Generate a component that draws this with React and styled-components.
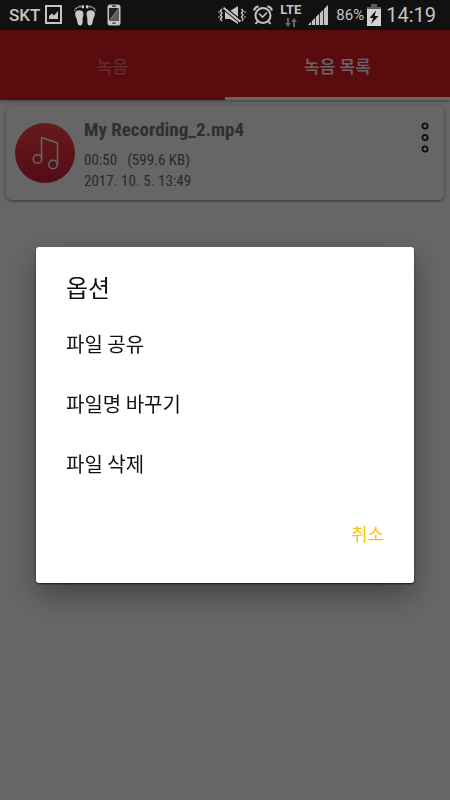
import React, { useState } from "react";
import styled, { createGlobalStyle } from "styled-components";

const tabs = ["녹음", "녹음 목록"];
const options = ["파일 공유", "파일명 바꾸기", "파일 삭제"];

function ImageIcon() {
  return (
    <Svg width="18" height="20" viewBox="0 0 18 20">
      <rect x="1" y="1" width="15" height="17" fill="none" stroke="#c4c4c4" strokeWidth="2" />
      <path d="M4 14V11L7 8.500L9 10.500L13 6V14Z" fill="#c4c4c4" />
    </Svg>
  );
}

function FeetIcon() {
  const foot = (
    <>
      <path d="M1.300 8.500C2.500 5.500 8 5.500 9.300 8.500C10 11.500 8.300 13 8.600 16C8.800 19 8.400 21.500 6.200 21.500C3.600 21.500 3.400 18 2.800 15.500C2.200 13 0.500 11.500 1.300 8.500Z" />
      <ellipse cx="8.800" cy="2.800" rx="1.400" ry="1.800" />
      <circle cx="6" cy="2.500" r="0.900" />
      <circle cx="3.900" cy="3.200" r="0.800" />
      <circle cx="2" cy="4.400" r="0.800" />
      <circle cx="0.800" cy="6.200" r="0.700" />
    </>
  );
  return (
    <Svg width="22" height="22" viewBox="0 0 22 22" fill="#c8c8c8">
      <g>{foot}</g>
      <g transform="translate(22 0) scale(-1 1)">{foot}</g>
    </Svg>
  );
}

function PhoneIcon() {
  return (
    <Svg width="14" height="22" viewBox="0 0 14 22">
      <rect x="0.500" y="0.500" width="13" height="21" rx="2.500" fill="#c4c4c4" />
      <rect x="2" y="4" width="10" height="13" fill="#222" />
      <path d="M12 4V17H2Z" fill="#5a5a5a" />
      <path d="M2 17L12 4" stroke="#999" strokeWidth="0.800" />
      <path d="M5 2.200H9M5.500 19.200H8.500" stroke="#222" strokeWidth="1.200" />
    </Svg>
  );
}

function MuteIcon() {
  return (
    <Svg width="28" height="18" viewBox="0 0 28 18" fill="none" stroke="#c4c4c4">
      <path d="M7 5H12L20 0V18L12 13H7Z" fill="#c4c4c4" stroke="none" />
      <path d="M6 0.500L23 14" stroke="#111" strokeWidth="1.500" />
      <path d="M5.500 3.500L22 17" stroke="#111" strokeWidth="1.200" />
      <path d="M5.500 1.800L22.500 15.800" strokeWidth="2" />
      <path d="M4 3L2.500 5L4 7L2.500 9L4 11L2.500 13L4 15" strokeWidth="1.400" />
      <path d="M1 5V7M1 10V12" />
      <path d="M23.500 3L25 5L23.500 7L25 9L23.500 11L25 13L24 15" strokeWidth="1.400" />
      <path d="M27 5V7M27 10V12" />
    </Svg>
  );
}

function AlarmIcon() {
  return (
    <Svg width="20" height="20" viewBox="0 0 20 20" fill="none" stroke="#c4c4c4" strokeWidth="2">
      <circle cx="10" cy="10.500" r="7.500" />
      <path d="M6 8.500L9.500 12L14 7.500" strokeWidth="1.600" />
      <path d="M1 5.500C1.500 3 3 1.700 5.500 1.200M19 5.500C18.500 3 17 1.700 14.500 1.200M4.500 16.500L2.500 19M15.500 16.500L17.500 19" />
    </Svg>
  );
}

function DataArrows() {
  return (
    <Svg width="12" height="9" viewBox="0 0 12 9" fill="#666">
      <path d="M2 0H4V5H6L3 9L0 5H2Z" />
      <path d="M8 9H10V4H12L9 0L6 4H8Z" />
    </Svg>
  );
}

function SignalIcon() {
  return (
    <Svg width="20" height="20" viewBox="0 0 20 20" fill="#c4c4c4">
      <path d="M0 20L3.200 16.800V20ZM4 16L7.200 12.800V20H4ZM8 12L11.200 8.800V20H8ZM12 8L15.200 4.800V20H12ZM16 4L20 0V20H16Z" />
    </Svg>
  );
}

function BatteryIcon() {
  return (
    <Svg width="14" height="22" viewBox="0 0 14 22">
      <path d="M4 0H10V3H14V6H0V3H4Z" fill="#5c5c5c" />
      <path d="M0 5H14V22H0Z" fill="#d2d2d2" />
      <path d="M9 6.500L2.500 14H6.200L4 20L11.500 12H7.700Z" fill="#111" />
    </Svg>
  );
}

function NoteIcon() {
  return (
    <Svg width="60" height="60" viewBox="0 0 60 60" fill="none" stroke="#fff" strokeWidth="1.500">
      <circle cx="22.500" cy="36" r="4.300" />
      <circle cx="38" cy="41.500" r="4.300" />
      <path d="M26.500 36V14.500L42.500 20V41.500" strokeLinejoin="round" />
    </Svg>
  );
}

function MoreIcon() {
  return (
    <Svg width="8" height="32" viewBox="0 0 8 32" fill="none" stroke="#222" strokeWidth="1.800">
      <circle cx="4" cy="4" r="2.600" />
      <circle cx="4" cy="15.500" r="2.600" />
      <circle cx="4" cy="27" r="2.600" />
    </Svg>
  );
}

function Recording({ name, length, size, date }) {
  return (
    <Card>
      <Disc>
        <NoteIcon />
      </Disc>
      <Info>
        <Name>{name}</Name>
        <Meta>
          <span>{length}</span>
          <span>({size})</span>
        </Meta>
        <Meta>{date}</Meta>
      </Info>
      <MoreButton aria-label="옵션">
        <MoreIcon />
      </MoreButton>
    </Card>
  );
}

function App() {
  const [tab, setTab] = useState(1);
  const [open, setOpen] = useState(true);
  const close = () => setOpen(false);

  return (
    <>
      <GlobalStyle />
      <Page>
        <StatusBar>
          <Carrier>SKT</Carrier>
          <LeftIcons>
            <ImageIcon />
            <FeetIcon />
            <PhoneIcon />
          </LeftIcons>
          <RightIcons>
            <MuteIcon />
            <AlarmIcon />
            <Network>
              LTE
              <DataArrows />
            </Network>
            <SignalIcon />
          </RightIcons>
          <Percent>86%</Percent>
          <BatteryIcon />
          <Clock>14:19</Clock>
        </StatusBar>
        <Tabs>
          {tabs.map((label, idx) => (
            <Tab key={label} $active={idx === tab} onClick={() => setTab(idx)}>
              {label}
            </Tab>
          ))}
        </Tabs>
        <List>
          <Recording
            name="My Recording_2.mp4"
            length="00:50"
            size="599.6 KB"
            date="2017. 10. 5. 13:49"
          />
        </List>
      </Page>
      {open && (
        <Scrim>
          <Dialog role="dialog" aria-labelledby="dialog-title">
            <Title id="dialog-title">옵션</Title>
            {options.map((option) => (
              <Option key={option} onClick={close}>
                {option}
              </Option>
            ))}
            <Actions>
              <Cancel onClick={close}>취소</Cancel>
            </Actions>
          </Dialog>
        </Scrim>
      )}
    </>
  );
}

const GlobalStyle = createGlobalStyle`
  * {
    box-sizing: border-box;
  }
  body {
    margin: 0;
    background: #fff;
    font-family: Roboto, "Noto Sans CJK KR", sans-serif;
  }
  button {
    border: 0;
    padding: 0;
    background: none;
    font-family: inherit;
    cursor: pointer;
  }
`;

const Svg = styled.svg`
  display: block;
  flex: none;
`;

const Page = styled.div`
  min-height: 100vh;
  display: flex;
  flex-direction: column;
`;

const StatusBar = styled.div`
  height: 30px;
  padding: 0 14px 0 9px;
  display: flex;
  align-items: center;
  background: #111;
  color: #c4c4c4;
`;

const Carrier = styled.span`
  font-size: 17px;
  font-weight: 500;
`;

const LeftIcons = styled.div`
  display: flex;
  align-items: center;
  gap: 11px;
  margin-left: 5px;
`;

const RightIcons = styled.div`
  display: flex;
  align-items: center;
  gap: 7px;
  margin-left: auto;
`;

const Network = styled.div`
  display: flex;
  flex-direction: column;
  align-items: center;
  gap: 2px;
  font-size: 13px;
  line-height: 12px;
  font-weight: 700;
`;

const Percent = styled.span`
  margin: 0 3px 0 8px;
  font-size: 15px;
`;

const Clock = styled.span`
  margin-left: 5px;
  font-size: 20px;
`;

const Tabs = styled.nav`
  height: 70px;
  display: flex;
  background: #df1c22;
  box-shadow: 0 1px 4px rgba(0, 0, 0, 0.4);
`;

const Tab = styled.button`
  flex: 1;
  padding-top: 3px;
  border-bottom: 3px solid ${(props) => (props.$active ? "#fff" : "transparent")};
  color: ${(props) => (props.$active ? "#fff" : "rgba(255, 255, 255, 0.4)")};
  font-size: 17px;
  font-weight: 500;
`;

const List = styled.main`
  padding: 6px;
`;

const Card = styled.article`
  height: 94px;
  padding: 0 15px 0 9px;
  display: flex;
  align-items: center;
  background: #fff;
  border-radius: 5px;
  box-shadow: 0 1px 3px rgba(0, 0, 0, 0.5);
`;

const Disc = styled.div`
  border-radius: 50%;
  background: linear-gradient(#f8483f, #d41c3c);
`;

const Info = styled.div`
  flex: 1;
  margin-left: 9px;
  padding-top: 3px;
  font-family: "Roboto Condensed", "Liberation Sans Narrow", Roboto, sans-serif;
`;

const Name = styled.h2`
  margin: 0 0 8px;
  font-size: 19px;
  line-height: 24px;
  font-weight: 700;
  color: #767676;
`;

const Meta = styled.div`
  display: flex;
  gap: 10px;
  font-size: 15px;
  line-height: 21px;
  color: #6b6b6b;
`;

const MoreButton = styled.button`
  align-self: flex-start;
  margin-top: 16px;
`;

const Scrim = styled.div`
  position: fixed;
  inset: 30px 0 0;
  display: flex;
  align-items: center;
  justify-content: center;
  padding: 0 36px;
  background: rgba(0, 0, 0, 0.6);
`;

const Dialog = styled.section`
  flex: 1;
  max-width: 480px;
  padding: 24px 0 26px;
  display: flex;
  flex-direction: column;
  background: #fff;
  border-radius: 3px;
  box-shadow: 0 1px 2px rgba(0, 0, 0, 0.7), 0 12px 30px rgba(0, 0, 0, 0.35);
  font-family: "Noto Sans CJK KR", sans-serif;
`;

const Title = styled.h1`
  margin: 0 0 10px;
  padding: 0 30px;
  font-size: 24px;
  line-height: 32px;
  font-weight: 400;
  color: #111;
`;

const Option = styled.button`
  height: 60px;
  padding: 0 30px;
  font-size: 20px;
  text-align: left;
  color: #111;
`;

const Actions = styled.div`
  display: flex;
  justify-content: flex-end;
  margin-top: 16px;
  padding: 0 30px;
`;

const Cancel = styled.button`
  height: 48px;
  font-size: 18px;
  color: #ffc107;
`;

export default App;
